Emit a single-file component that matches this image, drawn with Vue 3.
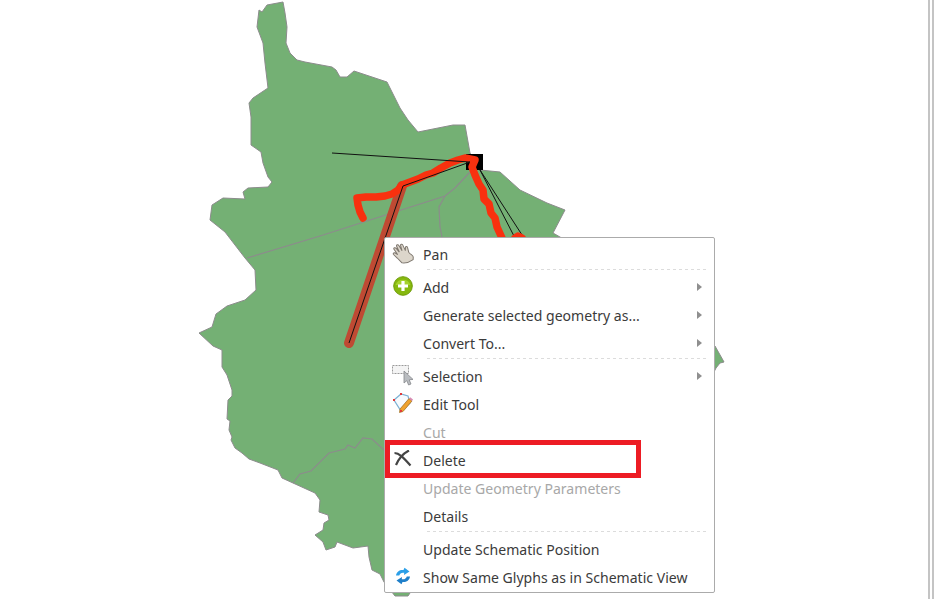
<template>
  <div class="canvas">
    <!-- map -->
    <svg class="map" width="937" height="599" viewBox="0 0 937 599">
      <polygon class="region" :points="outline" />
      <polyline class="border" points="293,483 300,474 311,471 329,453 345,449 348,445 355,448 363,438 372,439 384,450" />
      <polyline class="border" points="247,258 320,236 445,196 455,188 470,172" />
      <polyline class="border" points="445,196 439,207 440,227 442,237" />
      <rect x="466" y="154" width="17" height="16" fill="#000" />
      <line class="thin" x1="480" y1="170" x2="515" y2="238" />
      <line class="thin" x1="480" y1="170" x2="524" y2="238" />
      <line class="selected" x1="402" y1="186" x2="349" y2="343" />
      <polyline class="route" :points="route" />
      <polyline class="route" points="515,238 518,236 522,238" />
      <polyline class="thin" points="332,153 470,162 403,186 349,343" />
    </svg>

    <div class="divider-a"></div>
    <div class="divider-b"></div>

    <!-- context menu -->
    <div class="menu">
      <template v-for="item in items" :key="item.label">
        <div v-if="item.sep" class="sep"></div>
        <div class="row" :class="{ disabled: item.disabled }">
          <span class="icon">
            <svg v-if="item.icon === 'hand'" width="22" height="22" viewBox="0 0 22 22">
              <path d="M7 20 L4 14 L1.5 9.5 C1 8 3 7.5 4 9 L5.5 11 L3.5 4.5 C3.5 3 5.3 3 6 4.5 L7.8 9 L7 2.6 C7 1 9 1 9.4 2.5 L10.8 8.6 L11 3 C11.2 1.7 13 1.8 13.2 3.2 L14 9.5 L15 6.5 C15.6 5.3 17.3 5.8 17 7.3 L16.7 12 C17.5 15 20 16 19.5 18 L18.6 20.4 C15 21.6 10 21.4 7 20 Z" fill="#dcd6cb" stroke="#7d766d" stroke-width="1" transform="rotate(-18 11 11)" />
            </svg>
            <svg v-else-if="item.icon === 'add'" width="20" height="20" viewBox="0 0 20 20">
              <circle cx="10" cy="10" r="9.3" fill="#86b80e" stroke="#6f9c0a" />
              <path d="M2.5 9 A8 8 0 0 1 17.5 9 Z" fill="#a5d22c" />
              <path d="M10 5 V15 M5 10 H15" stroke="#fff" stroke-width="3.2" />
            </svg>
            <svg v-else-if="item.icon === 'select'" width="24" height="22" viewBox="0 0 24 22">
              <rect x="1.5" y="1.5" width="16" height="8" fill="#f4f4f4" stroke="#9a9a9a" stroke-dasharray="2 1" />
              <path d="M13 7 L13 19 L15.8 16.6 L17.6 21 L20 20 L18.2 15.8 L22 15.4 Z" fill="#b9bcc0" stroke="#85888c" stroke-width=".8" />
            </svg>
            <svg v-else-if="item.icon === 'edit'" width="22" height="22" viewBox="0 0 22 22">
              <polygon points="2,8 9,2 16,4 18,11 9,19" fill="#f7fbfe" stroke="#7db1d3" stroke-width="1.2" />
              <path d="M8 17 L17 6.5 L20 9 L11 19.5 L7.5 20.5 Z" fill="#f0a22e" stroke="#9a6a1e" stroke-width=".7" />
              <path d="M17 6.5 L18.2 5.2 L21 7.6 L20 9 Z" fill="#d88ab5" />
              <rect x="1" y="7" width="2" height="2" fill="#e23a3a" />
              <rect x="8" y="1" width="2" height="2" fill="#e23a3a" />
              <rect x="8" y="18" width="2" height="2" fill="#e23a3a" />
            </svg>
            <svg v-else-if="item.icon === 'delete'" width="20" height="18" viewBox="0 0 20 18">
              <path d="M1.5 3 C6 3 10 7 17.5 15.5" stroke="#444" stroke-width="2.2" fill="none" />
              <path d="M16 0.5 C11 3 6 8 3 15" stroke="#444" stroke-width="2.2" fill="none" />
            </svg>
            <svg v-else-if="item.icon === 'sync'" width="18" height="18" viewBox="0 0 18 18">
              <path d="M2 8.5 C2.5 4.5 6 2.5 9.5 3 L10.5 0.8 L15.5 4.5 L10 8 L10.2 5.8 C7.5 5.2 6 6.5 5.2 8.5 Z" fill="#2b9fe8" />
              <path d="M16 9.5 C15.5 13.5 12 15.5 8.5 15 L7.5 17.2 L2.5 13.5 L8 10 L7.8 12.2 C10.5 12.8 12 11.5 12.8 9.5 Z" fill="#1f7fc9" />
            </svg>
          </span>
          <span class="label">{{ item.label }}</span>
          <span v-if="item.sub" class="arrow"></span>
        </div>
      </template>
      <div class="highlight"></div>
    </div>
  </div>
</template>

<script setup>
const outline = [
  '267,5 283,2 285,13 287,27 286,43 290,53 297,60 305,62 332,67 336,70 340,77 347,77 354,71 387,82',
  '392,92 400,108 408,120 418,132 453,125 465,125 470,153 480,170 500,172 520,190 547,203 565,210 553,233',
  '600,260 660,300 700,335 715,346 724,362 720,363 716,368 690,420 640,500 560,560 470,590 412,590',
  '408,596 395,596 384,582 380,574 372,570 369,557 368,546 353,548 337,542 335,547 326,550 323,542 315,535',
  '323,530 324,523 329,520 328,515 319,512 320,500 315,493 293,483 282,478 278,470 260,463 249,459 242,453',
  '235,448 231,440 232,437 229,430 230,421 227,419 228,400 232,396 232,390 227,375 222,367 222,350 213,346',
  '199,333 212,327 216,314 227,306 245,300 256,290 255,270 245,258 225,232 210,220 212,205 223,198 245,199',
  '243,192 248,188 268,187 272,182 268,177 263,163 261,152 251,145 251,117 249,103 253,98 268,88 265,63',
  '263,43 257,27 259,10 262,12'
].join(' ')

// 红色路径，带一点抖动
const route = '363,218 360,212 358,205 357,198 366,197 376,197 385,196 392,194 398,190 402,185 410,182 418,179 426,175 433,173 441,168 450,163 458,160 465,158 475,160 472,167 475,175 479,184 483,190 484,199 489,204 491,213 495,218 497,227 502,238'

const items = [
  { label: 'Pan', icon: 'hand' },
  { label: 'Add', icon: 'add', sub: true, sep: true },
  { label: 'Generate selected geometry as...', sub: true },
  { label: 'Convert To...', sub: true },
  { label: 'Selection', icon: 'select', sub: true, sep: true },
  { label: 'Edit Tool', icon: 'edit' },
  { label: 'Cut', disabled: true },
  { label: 'Delete', icon: 'delete' },
  { label: 'Update Geometry Parameters', disabled: true },
  { label: 'Details' },
  { label: 'Update Schematic Position', sep: true },
  { label: 'Show Same Glyphs as in Schematic View', icon: 'sync' }
]
</script>

<style>
html, body {
  margin: 0;
  background: #fff;
  overflow: hidden;
}
</style>

<style scoped>
.canvas {
  position: relative;
  width: 937px;
  height: 599px;
  overflow: hidden;
  background: #fff;
  font-family: "Noto Sans", "Open Sans", sans-serif;
}

.map {
  position: absolute;
  left: 0;
  top: 0;
}

.region {
  fill: #74b074;
  stroke: #8c8c8c;
  stroke-width: 1;
}

.border {
  fill: none;
  stroke: #8c8c8c;
  stroke-width: 1.2;
}

.thin {
  fill: none;
  stroke: #111;
  stroke-width: 1;
}

.selected {
  stroke: #bf4a33;
  stroke-width: 10;
  stroke-linecap: round;
}

.route {
  fill: none;
  stroke: #f8310f;
  stroke-width: 7.5;
  stroke-linecap: round;
  stroke-linejoin: round;
}

.divider-a,
.divider-b {
  position: absolute;
  top: 0;
  bottom: 0;
  width: 2px;
  background: #c4c4c4;
}

.divider-a {
  left: 928px;
}

.divider-b {
  left: 932px;
}

/* 右键菜单 */
.menu {
  position: absolute;
  left: 384px;
  top: 237px;
  width: 331px;
  height: 356px;
  box-sizing: border-box;
  padding: 2px 0 0;
  background: #fff;
  border: 1px solid #ababab;
  border-radius: 2px;
}

.row {
  display: flex;
  align-items: center;
  height: 28px;
  padding-left: 38px;
  position: relative;
  font-size: 14.05px;
  color: #3b3b3b;
  white-space: nowrap;
}

.row.disabled {
  color: #a8a8a8;
}

.icon {
  position: absolute;
  left: 5px;
  top: 1px;
  width: 26px;
  height: 24px;
  display: flex;
  align-items: center;
  justify-content: center;
}

.arrow {
  position: absolute;
  right: 12px;
  top: 10px;
  border-left: 5px solid #8f8f8f;
  border-top: 4px solid transparent;
  border-bottom: 4px solid transparent;
}

.sep {
  height: 5px;
  margin: 0 6px 0 42px;
  background-image: repeating-linear-gradient(to right, #dcdcdc 0 3px, transparent 3px 6px);
  background-size: 100% 1px;
  background-repeat: no-repeat;
  background-position: 0 1px;
}

.highlight {
  position: absolute;
  left: 0;
  top: 202px;
  width: 256px;
  height: 38px;
  box-sizing: border-box;
  border: 5px solid #ed1c24;
}
</style>
